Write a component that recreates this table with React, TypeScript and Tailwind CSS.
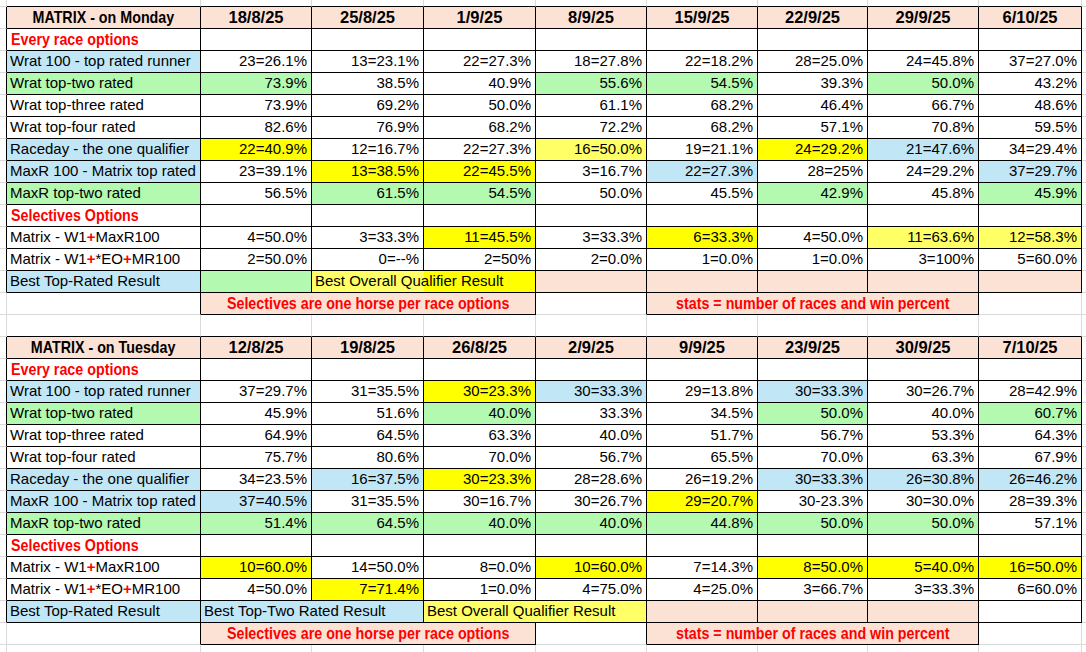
import type { ReactNode } from 'react'
import clsx from 'clsx'

type Tone = 'w' | 'y' | 'l' | 'b' | 'g' | 'p'
type Edge = 'k' | 'g' | 'n'

const BG: Record<Tone, string> = {
  w: 'bg-white',
  y: 'bg-[#ffff00]',
  l: 'bg-[#ffff66]',
  b: 'bg-[#c1e6f5]',
  g: 'bg-[#b3f9b0]',
  p: 'bg-[#fbe2d5]',
}
const RIGHT: Record<Edge, string> = {
  k: 'border-r border-r-black',
  g: 'border-r border-r-[#dadada]',
  n: '',
}
const BOTTOM: Record<Edge, string> = {
  k: 'border-b border-b-black',
  g: 'border-b border-b-[#dadada]',
  n: '',
}
const SPAN: Record<number, string> = { 1: '', 2: 'col-span-2', 3: 'col-span-3' }

const SANS = "font-['Liberation_Sans',Arial,sans-serif]"
const BOLD = "font-['Liberation_Sans',Arial,sans-serif] font-bold text-[17px]"

function Cell({
  span = 1, tone = 'w', r = 'k', b = 'k', h = 'h-[22px]', className, children,
}: {
  span?: number; tone?: Tone; r?: Edge; b?: Edge; h?: string; className?: string; children?: ReactNode
}) {
  return (
    <div className={clsx(h, 'flex items-center whitespace-nowrap', SPAN[span], BG[tone], RIGHT[r], BOTTOM[b], className)}>
      {children}
    </div>
  )
}

// Excel's bold headings are set in a narrow face; squeeze Liberation Sans to match
function Narrow({ left, children }: { left?: boolean; children: ReactNode }) {
  return (
    <span className={clsx('inline-block scale-x-[0.84]', left ? 'origin-left' : 'origin-center')}>{children}</span>
  )
}

// outside-the-table cells that only carry Excel's gridlines
function Margin({ r = 'k', h }: { r?: Edge; h?: string }) {
  return <Cell r={r} b="g" h={h} />
}
function Tail({ h, b = 'g' }: { h?: string; b?: Edge }) {
  return <Cell r="n" b={b} h={h} />
}

function Plus() {
  return <span className="font-bold text-[#ff0000]">+</span>
}

function parse(s: string): [string, Tone][] {
  return s.split(' ').map((x) => {
    const [t, c] = x.split(':')
    return [t, (c as Tone) || 'w']
  })
}

function HeadRow({ title, dates }: { title: string; dates: string[] }) {
  return (
    <>
      <Margin />
      <Cell tone="p" className={clsx(BOLD, 'justify-center')}><Narrow>{title}</Narrow></Cell>
      {dates.map((d) => (
        <Cell key={d} tone="p" className={clsx(SANS, 'justify-center text-[16.5px] font-bold')}>{d}</Cell>
      ))}
      <Tail />
    </>
  )
}

function SectionRow({ title }: { title: string }) {
  return (
    <>
      <Margin />
      <Cell className={clsx(BOLD, 'pl-[4px] text-[#ff0000]')}><Narrow left>{title}</Narrow></Cell>
      {Array.from({ length: 8 }).map((_, i) => <Cell key={i} />)}
      <Tail />
    </>
  )
}

function DataRow({ label, tone = 'w', vals }: { label: ReactNode; tone?: Tone; vals: string }) {
  return (
    <>
      <Margin />
      <Cell tone={tone} className={clsx(SANS, 'pl-[3px] text-[15px]')}>{label}</Cell>
      {parse(vals).map(([t, c], i) => (
        <Cell key={i} tone={c} className={clsx(SANS, 'justify-end pr-[4px] text-[15px]')}>{t}</Cell>
      ))}
      <Tail />
    </>
  )
}

function NoteRow() {
  const note = clsx(BOLD, 'justify-center text-[#ff0000]')
  return (
    <>
      <Margin r="g" />
      <Cell b="g" />
      <Cell span={3} tone="p" className={note}><Narrow>Selectives are one horse per race options</Narrow></Cell>
      <Cell b="g" />
      <Cell span={3} tone="p" className={note}><Narrow>stats = number of races and win percent</Narrow></Cell>
      <Cell r="g" b="g" />
      <Tail />
    </>
  )
}

function GridStrip({ h, top }: { h: string; top: boolean }) {
  // rows of bare spreadsheet grid above / between / below the tables
  return (
    <>
      <Cell r="g" b={top ? 'g' : 'n'} h={h} />
      {Array.from({ length: 9 }).map((_, i) => (
        <Cell key={i} r="g" b={top ? 'k' : 'n'} h={h} />
      ))}
      <Cell r="n" b={top ? 'g' : 'n'} h={h} />
    </>
  )
}

const txt = clsx(SANS, 'pl-[3px] text-[15px]')

function Monday() {
  return (
    <>
      <HeadRow title="MATRIX - on Monday" dates={['18/8/25', '25/8/25', '1/9/25', '8/9/25', '15/9/25', '22/9/25', '29/9/25', '6/10/25']} />
      <SectionRow title="Every race options" />
      <DataRow label="Wrat 100 - top rated runner" tone="b" vals="23=26.1% 13=23.1% 22=27.3% 18=27.8% 22=18.2% 28=25.0% 24=45.8% 37=27.0%" />
      <DataRow label="Wrat top-two rated" tone="g" vals="73.9%:g 38.5% 40.9% 55.6%:g 54.5%:g 39.3% 50.0%:g 43.2%" />
      <DataRow label="Wrat top-three rated" vals="73.9% 69.2% 50.0% 61.1% 68.2% 46.4% 66.7% 48.6%" />
      <DataRow label="Wrat top-four rated" vals="82.6% 76.9% 68.2% 72.2% 68.2% 57.1% 70.8% 59.5%" />
      <DataRow label="Raceday - the one qualifier" tone="b" vals="22=40.9%:y 12=16.7% 22=27.3% 16=50.0%:l 19=21.1% 24=29.2%:y 21=47.6%:b 34=29.4%" />
      <DataRow label="MaxR 100 - Matrix top rated" tone="b" vals="23=39.1% 13=38.5%:y 22=45.5%:y 3=16.7% 22=27.3%:b 28=25% 24=29.2% 37=29.7%:b" />
      <DataRow label="MaxR top-two rated" tone="g" vals="56.5% 61.5%:g 54.5%:g 50.0% 45.5% 42.9%:g 45.8% 45.9%:g" />
      <SectionRow title="Selectives Options" />
      <DataRow label={<>Matrix - W1<Plus />MaxR100</>} vals="4=50.0% 3=33.3% 11=45.5%:y 3=33.3% 6=33.3%:y 4=50.0% 11=63.6%:l 12=58.3%:l" />
      <DataRow label={<>Matrix - W1<Plus />*EO<Plus />MR100</>} vals="2=50.0% 0=--% 2=50% 2=0.0% 1=0.0% 1=0.0% 3=100% 5=60.0%" />
      {/* best results key */}
      <Margin />
      <Cell tone="b" className={txt}>Best Top-Rated Result</Cell>
      <Cell tone="g" />
      <Cell tone="l" r="n" className={clsx(txt, 'relative z-10')}>Best Overall Qualifier Result</Cell>
      <Cell tone="y" />
      <Cell tone="p" />
      <Cell tone="p" />
      <Cell tone="p" />
      <Cell tone="p" />
      <Cell tone="p" />
      <Tail />
      <NoteRow />
    </>
  )
}

function Tuesday() {
  return (
    <>
      <HeadRow title="MATRIX - on Tuesday" dates={['12/8/25', '19/8/25', '26/8/25', '2/9/25', '9/9/25', '23/9/25', '30/9/25', '7/10/25']} />
      <SectionRow title="Every race options" />
      <DataRow label="Wrat 100 - top rated runner" tone="b" vals="37=29.7% 31=35.5% 30=23.3%:y 30=33.3%:b 29=13.8% 30=33.3%:b 30=26.7% 28=42.9%" />
      <DataRow label="Wrat top-two rated" tone="g" vals="45.9% 51.6% 40.0%:g 33.3% 34.5% 50.0%:g 40.0% 60.7%:g" />
      <DataRow label="Wrat top-three rated" vals="64.9% 64.5% 63.3% 40.0% 51.7% 56.7% 53.3% 64.3%" />
      <DataRow label="Wrat top-four rated" vals="75.7% 80.6% 70.0% 56.7% 65.5% 70.0% 63.3% 67.9%" />
      <DataRow label="Raceday - the one qualifier" tone="b" vals="34=23.5% 16=37.5%:b 30=23.3%:y 28=28.6% 26=19.2% 30=33.3%:b 26=30.8%:b 26=46.2%:b" />
      <DataRow label="MaxR 100 - Matrix top rated" tone="b" vals="37=40.5%:b 31=35.5% 30=16.7% 30=26.7% 29=20.7%:y 30-23.3% 30=30.0% 28=39.3%" />
      <DataRow label="MaxR top-two rated" tone="g" vals="51.4%:g 64.5%:g 40.0%:g 40.0%:g 44.8%:g 50.0%:g 50.0%:g 57.1%" />
      <SectionRow title="Selectives Options" />
      <DataRow label={<>Matrix - W1<Plus />MaxR100</>} vals="10=60.0%:y 14=50.0% 8=0.0% 10=60.0%:y 7=14.3% 8=50.0%:y 5=40.0%:y 16=50.0%:y" />
      <DataRow label={<>Matrix - W1<Plus />*EO<Plus />MR100</>} vals="4=50.0% 7=71.4%:y 1=0.0% 4=75.0% 4=25.0% 3=66.7% 3=33.3% 6=60.0%" />
      <Margin />
      <Cell tone="b" className={txt}>Best Top-Rated Result</Cell>
      <Cell tone="b" r="n" className={clsx(txt, 'relative z-10')}>Best Top-Two Rated Result</Cell>
      <Cell tone="b" />
      <Cell tone="l" r="n" className={clsx(txt, 'relative z-10')}>Best Overall Qualifier Result</Cell>
      <Cell tone="l" />
      <Cell tone="p" />
      <Cell tone="p" />
      <Cell tone="p" />
      <Cell />
      <Tail />
      <NoteRow />
    </>
  )
}

export default function App() {
  return (
    <div className="grid h-[652px] w-[1086px] grid-cols-[7px_194px_111px_112px_112px_111px_111px_110px_111px_103px_4px] content-start overflow-hidden bg-white text-black">
      <GridStrip h="h-[7px]" top />
      <Monday />
      <GridStrip h="h-[22px]" top />
      <Tuesday />
      <GridStrip h="h-[7px]" top={false} />
    </div>
  )
}
